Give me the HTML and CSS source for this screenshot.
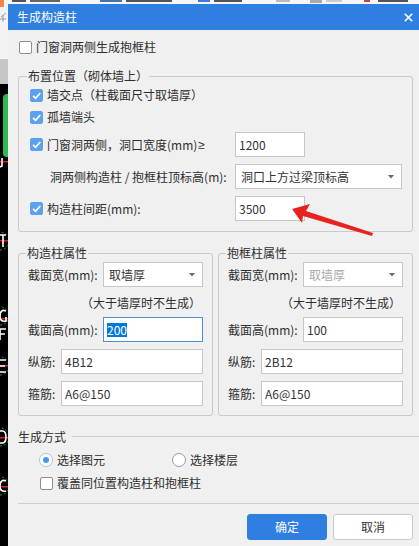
FILE: index.html
```html
<!DOCTYPE html>
<html lang="zh-CN">
<head>
<meta charset="utf-8">
<title>生成构造柱</title>
<link rel="stylesheet" href="styles.css">
</head>
<body>
<svg class="desk-top" width="419" height="5" viewBox="0 0 419 5">
  <rect x="0" y="0" width="419" height="5" fill="#f6f6f6"/>
  <rect x="12" y="0" width="14" height="2" fill="#555"/>
  <rect x="30" y="0" width="30" height="2" fill="#666"/>
  <rect x="100" y="0" width="22" height="2" fill="#4a6fb5"/>
  <rect x="126" y="0" width="46" height="2" fill="#555"/>
  <rect x="198" y="0" width="12" height="2" fill="#3d7be0"/>
  <rect x="214" y="0" width="28" height="2" fill="#555"/>
  <rect x="276" y="0" width="14" height="2" fill="#bbb"/>
  <rect x="310" y="0" width="12" height="3" fill="#aaa"/>
  <rect x="326" y="0" width="16" height="2" fill="#ccc"/>
  <rect x="364" y="0" width="6" height="2" fill="#c4472b"/>
  <rect x="378" y="0" width="30" height="2" fill="#555"/>
</svg>
<svg class="desk-left" width="8" height="546" viewBox="0 0 8 546">
  <rect x="0" y="0" width="8" height="59" fill="#f3f3f3"/>
  <rect x="0" y="0" width="4" height="7" fill="#f0874a"/>
  <path d="M1 17 L6 13 M3 15 L3 22 M0 19 L6 19" stroke="#9a9a9a" stroke-width="1" fill="none"/>
  <rect x="0" y="59" width="8" height="25" fill="#c6c6c6"/>
  <rect x="0" y="84" width="8" height="462" fill="#000"/>
  <rect x="3" y="94" width="9" height="63" rx="4" fill="#2fb84f"/>
  <rect x="0" y="161" width="8" height="1.5" fill="#d22"/>
  <path d="M2 158 L2 166 L0 167" stroke="#fff" stroke-width="1.6" fill="none"/>
  <g fill="none" stroke="#2a9a3a" stroke-width="1" stroke-dasharray="2 2">
    <circle cx="0" cy="241" r="9"/>
    <circle cx="0" cy="316" r="9"/>
    <circle cx="0" cy="366" r="9"/>
    <circle cx="0" cy="437" r="9"/>
    <circle cx="0" cy="486" r="9"/>
  </g>
  <g fill="#d22">
    <rect x="0" y="240" width="8" height="1.5"/>
    <rect x="0" y="318" width="8" height="1.5"/>
    <rect x="0" y="365" width="8" height="1.5"/>
    <rect x="0" y="437" width="8" height="1.5"/>
    <rect x="0" y="486" width="8" height="1.5"/>
  </g>
  <g stroke="#fff" stroke-width="1.6" fill="none">
    <path d="M0 235 L6 235 M3 235 L3 247"/>
    <path d="M6 311 C2 309 0 312 0 316 C0 320 2 322 6 321 L6 317"/>
    <path d="M0 329 L6 329 M0 334 L5 334 M0 329 L0 340"/>
    <path d="M0 360 L6 360 M0 366 L5 366 M0 372 L6 372"/>
    <path d="M0 431 L3 431 C7 432 7 442 3 443 L0 443"/>
    <path d="M6 481 C2 479 0 482 0 486 C0 490 2 492 6 491"/>
  </g>
</svg>

<div class="dialog">
  <div class="titlebar">
    <span class="title">生成构造柱</span>
    <svg class="close" width="9" height="9" viewBox="0 0 9 9"><path d="M0.8 0.8 L8.2 8.2 M8.2 0.8 L0.8 8.2" stroke="#fff" stroke-width="1.6"/></svg>
  </div>
  <div class="body">
    <div class="row topcheck"><span class="cb"></span>门窗洞两侧生成抱框柱</div>

    <div class="group g1">
      <div class="legend">布置位置（砌体墙上）</div>
      <div class="row r1"><span class="cb on"><svg viewBox="0 0 13 13" width="13" height="13"><path d="M3 6.8 L5.6 9.3 L10.2 4" stroke="#fff" stroke-width="1.8" fill="none"/></svg></span>墙交点（柱截面尺寸取墙厚）</div>
      <div class="row r2"><span class="cb on"><svg viewBox="0 0 13 13" width="13" height="13"><path d="M3 6.8 L5.6 9.3 L10.2 4" stroke="#fff" stroke-width="1.8" fill="none"/></svg></span>孤墙端头</div>
      <div class="row r3">
        <span class="lab"><span class="cb on"><svg viewBox="0 0 13 13" width="13" height="13"><path d="M3 6.8 L5.6 9.3 L10.2 4" stroke="#fff" stroke-width="1.8" fill="none"/></svg></span>门窗洞两侧，洞口宽度(mm)<span class="ge">≥</span></span>
        <span class="inp w70">1200</span>
      </div>
      <div class="row r4">
        <span class="lab indent">洞两侧构造柱 / 抱框柱顶标高(m):</span>
        <span class="sel w168"><span>洞口上方过梁顶标高</span><svg class="arrow" width="6" height="4" viewBox="0 0 6 4"><path d="M0 0 L6 0 L3 3.5 Z" fill="#666"/></svg></span>
      </div>
      <div class="row r5">
        <span class="lab"><span class="cb on"><svg viewBox="0 0 13 13" width="13" height="13"><path d="M3 6.8 L5.6 9.3 L10.2 4" stroke="#fff" stroke-width="1.8" fill="none"/></svg></span>构造柱间距(mm):</span>
        <span class="inp w70">3500</span>
      </div>
    </div>

    <div class="pair">
      <div class="group g2">
        <div class="legend">构造柱属性</div>
        <div class="row s1"><span class="lab2">截面宽(mm):</span><span class="sel grow"><span>取墙厚</span><svg class="arrow" width="6" height="4" viewBox="0 0 6 4"><path d="M0 0 L6 0 L3 3.5 Z" fill="#666"/></svg></span></div>
        <div class="note">（大于墙厚时不生成）</div>
        <div class="row s2"><span class="lab2">截面高(mm):</span><span class="inp grow focus"><span class="hl">200</span></span></div>
        <div class="row s3"><span class="lab3">纵筋:</span><span class="inp grow">4B12</span></div>
        <div class="row s4"><span class="lab3">箍筋:</span><span class="inp grow">A6@150</span></div>
      </div>
      <div class="group g2">
        <div class="legend">抱框柱属性</div>
        <div class="row s1"><span class="lab2">截面宽(mm):</span><span class="sel grow disabled"><span>取墙厚</span><svg class="arrow" width="6" height="4" viewBox="0 0 6 4"><path d="M0 0 L6 0 L3 3.5 Z" fill="#666"/></svg></span></div>
        <div class="note">（大于墙厚时不生成）</div>
        <div class="row s2"><span class="lab2">截面高(mm):</span><span class="inp grow">100</span></div>
        <div class="row s3"><span class="lab3">纵筋:</span><span class="inp grow">2B12</span></div>
        <div class="row s4"><span class="lab3">箍筋:</span><span class="inp grow">A6@150</span></div>
      </div>
    </div>

    <div class="row mode"><span>生成方式</span><span class="rule"></span></div>
    <div class="row radios">
      <span class="ropt first"><span class="rad on"></span>选择图元</span>
      <span class="ropt"><span class="rad"></span>选择楼层</span>
    </div>
    <div class="row cover"><span class="cb"></span>覆盖同位置构造柱和抱框柱</div>
    <div class="sep"></div>
    <div class="buttons">
      <span class="btn primary">确定</span>
      <span class="btn">取消</span>
    </div>
  </div>
</div>

<svg class="red-arrow" width="419" height="546" viewBox="0 0 419 546">
  <polygon points="292,209 310,204 306,211 373,233 372,236 303,216 302,223" fill="#e8231f"/>
</svg>
</body>
</html>
```
FILE: styles.css
```css
* { box-sizing: border-box; }

html, body {
  margin: 0;
  padding: 0;
}

body {
  width: 419px;
  height: 546px;
  overflow: hidden;
  position: relative;
  background: #000;
  font-family: "Noto Sans CJK SC", "Noto Sans", sans-serif;
  font-size: 12px;
  line-height: 16px;
  color: #2e2e2e;
}

.desk-top {
  position: absolute;
  left: 0;
  top: 0;
  display: block;
}

.desk-left {
  position: absolute;
  left: 0;
  top: 0;
  display: block;
}

.dialog {
  position: absolute;
  left: 8px;
  top: 4px;
  width: 415px;
  height: 560px;
  background: #f0f0f0;
}

.titlebar {
  height: 26px;
  background: #2e7fdf;
  color: #fff;
  display: flex;
  align-items: center;
  justify-content: space-between;
  padding: 0 10px 0 9px;
}

.title {
  font-size: 12px;
}

.close {
  display: block;
}

.body {
  padding: 0 10px;
}

.row {
  display: flex;
  align-items: center;
}

.topcheck {
  height: 20px;
  margin-top: 7px;
}

.cb {
  width: 13px;
  height: 13px;
  flex: none;
  border: 1px solid #8e8e8e;
  border-radius: 2px;
  background: #fff;
  margin: 0 4px 0 1px;
  position: relative;
}

.cb.on {
  background: #5aa2ef;
  border-color: #5aa2ef;
}

.cb svg {
  position: absolute;
  left: -1px;
  top: -1px;
  display: block;
}

.ge {
  font-family: "Liberation Sans", "DejaVu Sans", sans-serif;
  margin-left: 1px;
}

.group {
  border: 1px solid #c9c9c9;
  border-radius: 3px;
}

.legend {
  display: block;
  width: max-content;
  height: 16px;
  line-height: 16px;
  margin: -9px 0 0 -2px;
  padding: 0 1px;
  background: #f0f0f0;
}

.g1 {
  margin-top: 19px;
  height: 156px;
  padding: 0 10px;
}

.r1 { height: 20px; margin-top: 1px; }
.r2 { height: 20px; margin-top: 2px; }
.r3 { height: 25px; margin-top: 5px; }
.r4 { height: 25px; margin-top: 7px; }
.r5 { height: 25px; margin-top: 7px; }

.lab {
  width: 206px;
  flex: none;
  display: flex;
  align-items: center;
  white-space: nowrap;
}

.lab.indent {
  padding-left: 21px;
}

.inp, .sel {
  height: 25px;
  border: 1px solid #c6c6c6;
  background: #fff;
  display: flex;
  align-items: center;
  white-space: nowrap;
  color: #333;
}

.inp {
  padding-left: 3px;
}

.sel {
  justify-content: space-between;
  padding: 0 7px 0 5px;
}

.sel .arrow {
  display: block;
  flex: none;
}

.w70 { width: 70px; }
.w168 { width: 168px; }
.grow { flex: 1; min-width: 0; }

.inp.focus {
  border-color: #4f8fd8;
}

.hl {
  background: #0078d7;
  color: #fff;
  line-height: 14px;
}

.sel.disabled {
  color: #a8a8a8;
}

.pair {
  display: flex;
  gap: 5px;
  margin-top: 21px;
}

.g2 {
  width: 195px;
  height: 163px;
  padding: 0 9px;
}

.lab2 {
  width: 75px;
  flex: none;
  white-space: nowrap;
}

.lab3 {
  width: 33px;
  flex: none;
  white-space: nowrap;
}

.s1 { height: 25px; margin-top: 1px; }
.s2 { height: 25px; margin-top: 6px; }
.s3 { height: 25px; margin-top: 7px; }
.s4 { height: 25px; margin-top: 7px; }

.note {
  height: 16px;
  margin-top: 8px;
  text-align: right;
  padding-right: 2px;
  white-space: nowrap;
}

.mode {
  height: 16px;
  margin-top: 13px;
  margin-right: -10px;
}

.rule {
  flex: 1;
  height: 1px;
  background: #cdcdcd;
  margin-left: 6px;
  margin-top: -1px;
}

.radios {
  height: 16px;
  margin-top: 7px;
  padding-left: 21px;
}

.ropt {
  display: flex;
  align-items: center;
}

.ropt.first {
  width: 133px;
}

.rad {
  width: 14px;
  height: 14px;
  border: 1px solid #9a9a9a;
  border-radius: 50%;
  background: #fff;
  margin-right: 4px;
  flex: none;
  display: flex;
  align-items: center;
  justify-content: center;
}

.rad.on {
  border-color: #a9c4e6;
}

.rad.on::after {
  content: "";
  width: 6px;
  height: 6px;
  border-radius: 50%;
  background: #4a95ea;
}

.cover {
  height: 16px;
  margin-top: 7px;
  padding-left: 21px;
}

.sep {
  height: 1px;
  background: #cdcdcd;
  margin-top: 12px;
  margin-right: -10px;
}

.buttons {
  display: flex;
  justify-content: flex-end;
  gap: 6px;
  margin-top: 10px;
}

.btn {
  width: 80px;
  height: 26px;
  display: flex;
  align-items: center;
  justify-content: center;
  border: 1px solid #c9c9c9;
  border-radius: 3px;
  background: #fff;
  color: #333;
}

.btn.primary {
  background: #2e7fdf;
  border-color: #2e7fdf;
  color: #fff;
}

.red-arrow {
  position: absolute;
  left: 0;
  top: 0;
  display: block;
  pointer-events: none;
}
```
